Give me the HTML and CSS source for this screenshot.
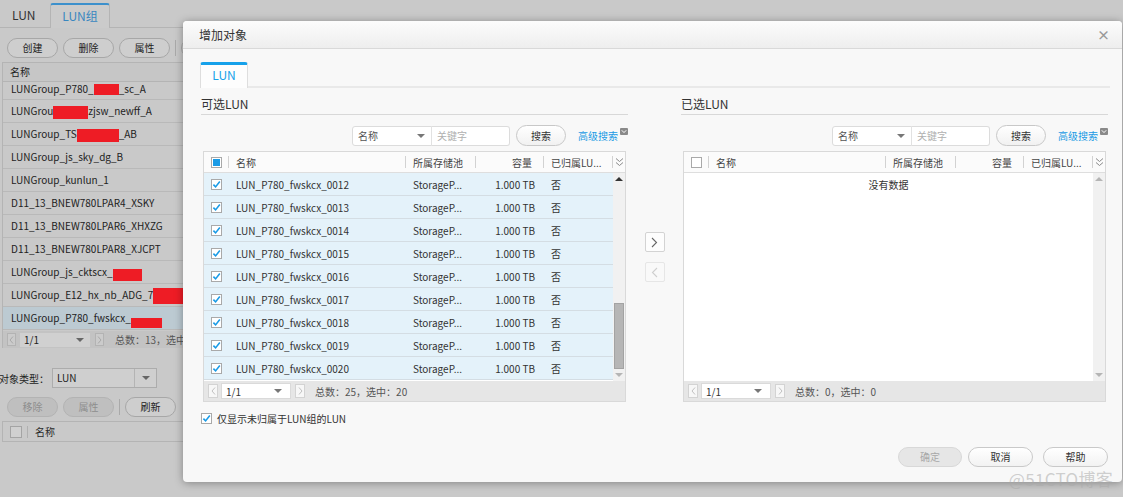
FILE: index.html
```html
<!DOCTYPE html>
<html>
<head>
<meta charset="utf-8">
<link rel="stylesheet" href="styles.css">
</head>
<body>
<div class="page">
  <div class="bg-tabs">
    <div class="bg-tab">LUN</div>
    <div class="bg-tab active">LUN组</div>
  </div>
  <div class="bg-toolbar">
    <span class="bg-btn">创建</span>
    <span class="bg-btn">删除</span>
    <span class="bg-btn">属性</span>
    <span class="bg-sep"></span>
    <span class="bg-btn"></span>
  </div>
  <div class="bg-list">
    <div class="bg-list-head">名称</div>
    <div class="bg-list-body">
      <div class="bg-row first">LUNGroup_P780_<span class="red r1"></span>_sc_A</div>
      <div class="bg-row">LUNGrou<span class="red r2"></span>zjsw_newff_A</div>
      <div class="bg-row">LUNGroup_TS<span class="red r3"></span>_AB</div>
      <div class="bg-row">LUNGroup_js_sky_dg_B</div>
      <div class="bg-row">LUNGroup_kunlun_1</div>
      <div class="bg-row">D11_13_BNEW780LPAR4_XSKY</div>
      <div class="bg-row">D11_13_BNEW780LPAR6_XHXZG</div>
      <div class="bg-row">D11_13_BNEW780LPAR8_XJCPT</div>
      <div class="bg-row">LUNGroup_js_cktscx_<span class="red r9"></span></div>
      <div class="bg-row">LUNGroup_E12_hx_nb_ADG_7<span class="red r10"></span></div>
      <div class="bg-row sel">LUNGroup_P780_fwskcx_<span class="red r11"></span></div>
    </div>
    <div class="bg-pager">
      <span class="bg-pbox"><svg width="5" height="8" viewBox="0 0 5 8"><path d="M4 0.5 L1 4 L4 7.5" fill="none" stroke="#a8a8a8" stroke-width="1"/></svg></span>
      <span class="bg-psel">1/1<i class="tri dark"></i></span>
      <span class="bg-pbox"><svg width="5" height="8" viewBox="0 0 5 8"><path d="M1 0.5 L4 4 L1 7.5" fill="none" stroke="#a8a8a8" stroke-width="1"/></svg></span>
      <span class="bg-ptext">总数：13，选中：1</span>
    </div>
  </div>
  <div class="bg-type">
    <span class="bg-type-label">对象类型：</span>
    <div class="bg-select"><span class="bg-select-val">LUN</span><span class="bg-select-dd"><i class="tri dark"></i></span></div>
  </div>
  <div class="bg-toolbar bg-toolbar2">
    <span class="bg-btn disabled">移除</span>
    <span class="bg-btn disabled">属性</span>
    <span class="bg-sep"></span>
    <span class="bg-btn">刷新</span>
  </div>
  <div class="bg-table2">
    <div class="bg-table2-head"><span class="bg-cb"></span><span class="bg-hsep"></span><span>名称</span></div>
  </div>
</div>

<div class="dialog">
  <div class="dlg-head">
    <span class="dlg-title">增加对象</span>
    <span class="dlg-close">×</span>
  </div>
  <div class="dlg-body">
    <div class="tabbar"><div class="tab">LUN</div></div>
    <div class="panes">
      <div class="pane">
        <div class="pane-title">可选LUN</div>
        <div class="search-row">
          <div class="sel-box"><span>名称</span><i class="tri"></i></div>
          <div class="kw">关键字</div>
          <div class="btn-search">搜索</div>
          <span class="adv">高级搜索</span>
          <svg class="adv-icon" width="8" height="7" viewBox="0 0 8 7"><rect x="0" y="0" width="8" height="7" rx="1" fill="#8a8a8a"/><path d="M1.8 2.3 L4 4.6 L6.2 2.3" fill="none" stroke="#fff" stroke-width="1"/></svg>
        </div>
        <div class="table">
          <div class="thead">
            <div class="c-cb"><span class="cb partial"><span></span></span></div>
            <div class="c-name hs">名称</div>
            <div class="c-pool hs">所属存储池</div>
            <div class="c-cap hs">容量</div>
            <div class="c-own hs">已归属LU...</div>
            <div class="c-opt"><svg width="9" height="10" viewBox="0 0 9 10"><path d="M1 1.5 L4.5 4.5 L8 1.5 M1 5.5 L4.5 8.5 L8 5.5" fill="none" stroke="#8a8a8a" stroke-width="1"/></svg></div>
          </div>
          <div class="tbody">
            <div class="rows">
              <div class="row"><div class="c-cb"><span class="cb"><svg width="9" height="9" viewBox="0 0 9 9"><path d="M1.4 4.6 L3.6 6.9 L7.8 1.6" fill="none" stroke="#1a9be6" stroke-width="1.6"/></svg></span></div><div class="c-name">LUN_P780_fwskcx_0012</div><div class="c-pool">StorageP...</div><div class="c-cap">1.000 TB</div><div class="c-own">否</div></div>
              <div class="row"><div class="c-cb"><span class="cb"><svg width="9" height="9" viewBox="0 0 9 9"><path d="M1.4 4.6 L3.6 6.9 L7.8 1.6" fill="none" stroke="#1a9be6" stroke-width="1.6"/></svg></span></div><div class="c-name">LUN_P780_fwskcx_0013</div><div class="c-pool">StorageP...</div><div class="c-cap">1.000 TB</div><div class="c-own">否</div></div>
              <div class="row"><div class="c-cb"><span class="cb"><svg width="9" height="9" viewBox="0 0 9 9"><path d="M1.4 4.6 L3.6 6.9 L7.8 1.6" fill="none" stroke="#1a9be6" stroke-width="1.6"/></svg></span></div><div class="c-name">LUN_P780_fwskcx_0014</div><div class="c-pool">StorageP...</div><div class="c-cap">1.000 TB</div><div class="c-own">否</div></div>
              <div class="row"><div class="c-cb"><span class="cb"><svg width="9" height="9" viewBox="0 0 9 9"><path d="M1.4 4.6 L3.6 6.9 L7.8 1.6" fill="none" stroke="#1a9be6" stroke-width="1.6"/></svg></span></div><div class="c-name">LUN_P780_fwskcx_0015</div><div class="c-pool">StorageP...</div><div class="c-cap">1.000 TB</div><div class="c-own">否</div></div>
              <div class="row"><div class="c-cb"><span class="cb"><svg width="9" height="9" viewBox="0 0 9 9"><path d="M1.4 4.6 L3.6 6.9 L7.8 1.6" fill="none" stroke="#1a9be6" stroke-width="1.6"/></svg></span></div><div class="c-name">LUN_P780_fwskcx_0016</div><div class="c-pool">StorageP...</div><div class="c-cap">1.000 TB</div><div class="c-own">否</div></div>
              <div class="row"><div class="c-cb"><span class="cb"><svg width="9" height="9" viewBox="0 0 9 9"><path d="M1.4 4.6 L3.6 6.9 L7.8 1.6" fill="none" stroke="#1a9be6" stroke-width="1.6"/></svg></span></div><div class="c-name">LUN_P780_fwskcx_0017</div><div class="c-pool">StorageP...</div><div class="c-cap">1.000 TB</div><div class="c-own">否</div></div>
              <div class="row"><div class="c-cb"><span class="cb"><svg width="9" height="9" viewBox="0 0 9 9"><path d="M1.4 4.6 L3.6 6.9 L7.8 1.6" fill="none" stroke="#1a9be6" stroke-width="1.6"/></svg></span></div><div class="c-name">LUN_P780_fwskcx_0018</div><div class="c-pool">StorageP...</div><div class="c-cap">1.000 TB</div><div class="c-own">否</div></div>
              <div class="row"><div class="c-cb"><span class="cb"><svg width="9" height="9" viewBox="0 0 9 9"><path d="M1.4 4.6 L3.6 6.9 L7.8 1.6" fill="none" stroke="#1a9be6" stroke-width="1.6"/></svg></span></div><div class="c-name">LUN_P780_fwskcx_0019</div><div class="c-pool">StorageP...</div><div class="c-cap">1.000 TB</div><div class="c-own">否</div></div>
              <div class="row"><div class="c-cb"><span class="cb"><svg width="9" height="9" viewBox="0 0 9 9"><path d="M1.4 4.6 L3.6 6.9 L7.8 1.6" fill="none" stroke="#1a9be6" stroke-width="1.6"/></svg></span></div><div class="c-name">LUN_P780_fwskcx_0020</div><div class="c-pool">StorageP...</div><div class="c-cap">1.000 TB</div><div class="c-own">否</div></div>
            </div>
            <div class="scroll">
              <div class="sc-arrow"><i class="tri-up"></i></div>
              <div class="sc-track"><div class="sc-thumb"></div></div>
              <div class="sc-arrow"><i class="tri light"></i></div>
            </div>
          </div>
          <div class="pager">
            <span class="pbox"><svg width="5" height="8" viewBox="0 0 5 8"><path d="M4 0.5 L1 4 L4 7.5" fill="none" stroke="#c0c0c0" stroke-width="1"/></svg></span>
            <span class="psel">1/1<i class="tri"></i></span>
            <span class="pbox"><svg width="5" height="8" viewBox="0 0 5 8"><path d="M1 0.5 L4 4 L1 7.5" fill="none" stroke="#c0c0c0" stroke-width="1"/></svg></span>
            <span class="ptext">总数：25，选中：20</span>
          </div>
        </div>
        <div class="only-row">
          <span class="cb"><svg width="9" height="9" viewBox="0 0 9 9"><path d="M1.4 4.6 L3.6 6.9 L7.8 1.6" fill="none" stroke="#1a9be6" stroke-width="1.6"/></svg></span>
          <span class="only-text">仅显示未归属于LUN组的LUN</span>
        </div>
      </div>

      <div class="mid">
        <div class="arrow-btn"><svg width="7" height="11" viewBox="0 0 7 11"><path d="M1 1 L5.5 5.5 L1 10" fill="none" stroke="#666" stroke-width="1.1"/></svg></div>
        <div class="arrow-btn disabled"><svg width="7" height="11" viewBox="0 0 7 11"><path d="M6 1 L1.5 5.5 L6 10" fill="none" stroke="#cfcfcf" stroke-width="1.1"/></svg></div>
      </div>

      <div class="pane">
        <div class="pane-title">已选LUN</div>
        <div class="search-row">
          <div class="sel-box"><span>名称</span><i class="tri"></i></div>
          <div class="kw">关键字</div>
          <div class="btn-search">搜索</div>
          <span class="adv">高级搜索</span>
          <svg class="adv-icon" width="8" height="7" viewBox="0 0 8 7"><rect x="0" y="0" width="8" height="7" rx="1" fill="#8a8a8a"/><path d="M1.8 2.3 L4 4.6 L6.2 2.3" fill="none" stroke="#fff" stroke-width="1"/></svg>
        </div>
        <div class="table">
          <div class="thead">
            <div class="c-cb"><span class="cb"></span></div>
            <div class="c-name hs">名称</div>
            <div class="c-pool hs">所属存储池</div>
            <div class="c-cap hs">容量</div>
            <div class="c-own hs">已归属LU...</div>
            <div class="c-opt"><svg width="9" height="10" viewBox="0 0 9 10"><path d="M1 1.5 L4.5 4.5 L8 1.5 M1 5.5 L4.5 8.5 L8 5.5" fill="none" stroke="#8a8a8a" stroke-width="1"/></svg></div>
          </div>
          <div class="tbody">
            <div class="rows empty"><div class="nodata">没有数据</div></div>
            <div class="scroll">
              <div class="sc-arrow"><i class="tri-up light"></i></div>
              <div class="sc-track"></div>
              <div class="sc-arrow"><i class="tri light"></i></div>
            </div>
          </div>
          <div class="pager">
            <span class="pbox"><svg width="5" height="8" viewBox="0 0 5 8"><path d="M4 0.5 L1 4 L4 7.5" fill="none" stroke="#c0c0c0" stroke-width="1"/></svg></span>
            <span class="psel">1/1<i class="tri"></i></span>
            <span class="pbox"><svg width="5" height="8" viewBox="0 0 5 8"><path d="M1 0.5 L4 4 L1 7.5" fill="none" stroke="#c0c0c0" stroke-width="1"/></svg></span>
            <span class="ptext">总数：0，选中：0</span>
          </div>
        </div>
      </div>
    </div>
  </div>
  <div class="dlg-foot">
    <span class="fbtn disabled">确定</span>
    <span class="fbtn cancel">取消</span>
    <span class="fbtn">帮助</span>
  </div>
</div>
<div class="watermark">@51CTO博客</div>
</body>
</html>
```

FILE: styles.css
```css
* { box-sizing: border-box; }
html, body { margin: 0; padding: 0; }
body {
  width: 1123px;
  height: 497px;
  overflow: hidden;
  position: relative;
  background: #c9c9c9;
  font-family: "Noto Sans CJK SC", "Open Sans", sans-serif;
  font-size: 10px;
  color: #2a2a2a;
}
i { display: inline-block; }

/* shared small triangles */
.tri {
  width: 0; height: 0;
  border-left: 4px solid transparent;
  border-right: 4px solid transparent;
  border-top: 4px solid #777;
}
.tri.dark { border-top-color: #666; }
.tri.light { border-top-color: #b5b5b5; }
.tri-up {
  width: 0; height: 0;
  border-left: 4px solid transparent;
  border-right: 4px solid transparent;
  border-bottom: 4px solid #333;
}
.tri-up.light { border-bottom-color: #b5b5b5; }

/* ---------- background (dimmed) page ---------- */
.page { width: 600px; }
.bg-tabs {
  display: flex;
  height: 28px;
  border-bottom: 1px solid #b4b4b4;
  font-size: 12px;
}
.bg-tab {
  width: 50px;
  margin-top: 3px;
  height: 24px;
  line-height: 24px;
  padding-left: 12px;
  color: #333;
}
.bg-tab.active {
  width: 60px;
  height: 25px;
  padding-left: 0;
  text-align: center;
  line-height: 22px;
  color: #3987c0;
  border: 1px solid #b4b4b4;
  border-top: 2px solid #3c90cc;
  border-bottom: none;
  border-radius: 3px 3px 0 0;
  background: #cbcbcb;
}
.bg-toolbar {
  display: flex;
  align-items: center;
  gap: 5px;
  margin-top: 10px;
  padding-left: 7px;
  height: 20px;
}
.bg-btn {
  width: 51px;
  height: 20px;
  border: 1px solid #a7a7a7;
  border-radius: 10px;
  background: #cecece;
  text-align: center;
  line-height: 18px;
  color: #222;
}
.bg-btn.disabled { background: #bfbfbf; color: #8e8e8e; border-color: #b3b3b3; }
.bg-sep { width: 1px; height: 16px; background: #a9a9a9; }
.bg-list {
  margin-top: 4px;
  margin-left: 2px;
  border-left: 1px solid #b4b4b4;
}
.bg-list-head {
  height: 20px;
  line-height: 18px;
  padding-left: 7px;
  border-top: 1px solid #b4b4b4;
  border-bottom: 1px solid #b4b4b4;
  background: #c6c6c6;
  color: #222;
}
.bg-list-body { height: 249px; overflow: hidden; }
.bg-row {
  height: 23px;
  line-height: 22px;
  padding-left: 8px;
  border-bottom: 1px solid #b9b9b9;
  white-space: nowrap;
  color: #222;
}
.bg-row.first { height: 18px; line-height: 13px; }
.bg-row.sel { background: #bccad2; }
.red { display: inline-block; background: #ee1c25; vertical-align: middle; }
.r1 { width: 25px; height: 11px; margin-top: -2px; }
.r2 { width: 35px; height: 13px; }
.r3 { width: 42px; height: 13px; }
.r9 { width: 29px; height: 12px; margin-top: 3px; }
.r10 { width: 31px; height: 16px; }
.r11 { width: 31px; height: 10px; margin-top: 8px; }
.bg-pager {
  height: 17px;
  background: #c3c3c3;
  display: flex;
  align-items: center;
  padding-left: 4px;
}
.bg-pbox {
  width: 9px; height: 13px;
  border: 1px solid #b3b3b3;
  background: #cbcbcb;
  display: flex; align-items: center; justify-content: center;
}
.bg-psel {
  width: 70px; height: 14px;
  margin: 0 5px 0 4px;
  background: #d0d0d0;
  display: flex; align-items: center; justify-content: space-between;
  padding: 0 6px 0 4px;
  color: #222;
}
.bg-ptext { margin-left: 11px; color: #555; white-space: nowrap; }
.bg-type {
  display: flex;
  align-items: center;
  margin-top: 20px;
  height: 20px;
}
.bg-type-label { color: #222; margin-left: -1px; }
.bg-select {
  display: flex;
  width: 105px;
  height: 20px;
  margin-left: 3px;
  border: 1px solid #acacac;
  background: #cfcfcf;
}
.bg-select-val { flex: 1; padding-left: 4px; line-height: 18px; color: #222; }
.bg-select-dd {
  width: 22px;
  border-left: 1px solid #b4b4b4;
  display: flex; align-items: center; justify-content: center;
}
.bg-toolbar2 { margin-top: 9px; }
.bg-table2 {
  margin-top: 4px;
  margin-left: 2px;
  border-left: 1px solid #b4b4b4;
  border-top: 1px solid #b4b4b4;
}
.bg-table2-head {
  height: 20px;
  display: flex;
  align-items: center;
  border-bottom: 1px solid #b4b4b4;
  padding-left: 7px;
}
.bg-cb { width: 12px; height: 12px; border: 1px solid #a4a4a4; background: #d0d0d0; }
.bg-hsep { width: 1px; height: 12px; background: #b0b0b0; margin: 0 7px 0 5px; }

/* ---------- dialog ---------- */
.dialog {
  position: absolute;
  left: 183px;
  top: 21px;
  width: 939px;
  height: 461px;
  background: #f8f8f8;
  border-radius: 4px;
  box-shadow: 0 1px 8px rgba(0, 0, 0, 0.35);
  display: flex;
  flex-direction: column;
}
.dlg-head {
  flex: none;
  height: 28px;
  display: flex;
  align-items: center;
  justify-content: space-between;
  padding: 0 12px 0 16px;
  background: linear-gradient(#fcfcfc, #eeeeee);
  border-bottom: 1px solid #d9d9d9;
  border-radius: 4px 4px 0 0;
  font-size: 12px;
  color: #333;
}
.dlg-close { font-size: 13px; color: #999; font-weight: bold; line-height: 1; }
.dlg-body { padding: 13px 12px 0 17px; }
.tabbar {
  display: flex;
  border-bottom: 2px solid #e9e9e9;
  height: 26px;
}
.tab {
  width: 48px;
  height: 26px;
  border: 1px solid #dedede;
  border-top: 3px solid #16a1ea;
  border-bottom: none;
  border-radius: 3px 3px 0 0;
  background: #fdfdfd;
  color: #16a1ea;
  font-size: 12px;
  text-align: center;
  line-height: 20px;
}
.panes { display: flex; margin-left: 1px; }
.pane { width: 427px; display: flex; flex-direction: column; }
.pane-title {
  height: 27px;
  padding-top: 8px;
  line-height: 16px;
  border-bottom: 1px solid #d8d8d8;
  font-size: 12px;
  color: #333;
}
.search-row {
  display: flex;
  justify-content: flex-end;
  align-items: center;
  margin-top: 10px;
  height: 21px;
}
.sel-box {
  width: 80px;
  height: 20px;
  border: 1px solid #dcdcdc;
  border-radius: 3px 0 0 3px;
  background: #fff;
  display: flex;
  align-items: center;
  justify-content: space-between;
  padding: 0 6px 0 5px;
  color: #555;
}
.kw {
  width: 79px;
  height: 20px;
  border: 1px solid #dcdcdc;
  border-left: 1px solid #e2e2e2;
  margin-left: -1px;
  border-radius: 0 3px 3px 0;
  background: #fff;
  color: #b0b0b0;
  padding-left: 5px;
  line-height: 18px;
}
.btn-search {
  width: 50px;
  height: 21px;
  margin-left: 6px;
  border: 1px solid #c8c8c8;
  border-radius: 11px;
  background: linear-gradient(#ffffff, #f1f1f1);
  text-align: center;
  line-height: 19px;
  color: #333;
}
.adv { margin-left: 12px; color: #1a9ae4; white-space: nowrap; }
.adv-icon { align-self: flex-start; margin: 3px 0 0 2px; }

.table {
  margin: 5px 2px 0 2px;
  border: 1px solid #d9d9d9;
  background: #fff;
}
.thead {
  display: flex;
  height: 21px;
  border-bottom: 1px solid #dedede;
  background: #fbfbfb;
  color: #444;
}
.thead > div, .row > div {
  display: flex;
  align-items: center;
  white-space: nowrap;
  overflow: hidden;
}
.c-cb { width: 25px; padding-left: 7px; }
.c-name { width: 177px; padding-left: 7px; }
.c-pool { width: 70px; padding-left: 7px; }
.c-cap { width: 68px; justify-content: flex-end; padding-right: 9px; }
.thead .c-cap { padding-right: 12px; }
.c-own { width: 69px; padding-left: 7px; }
.c-opt { width: 12px; justify-content: center; }
.thead .c-cb, .hs {
  background: linear-gradient(#d2d2d2, #d2d2d2) right center / 1px 12px no-repeat;
}
.thead > .c-cap { justify-content: flex-end; }

.cb {
  width: 11px;
  height: 11px;
  border: 1px solid #a9a9a9;
  background: #fff;
  display: inline-flex;
  align-items: center;
  justify-content: center;
  flex: none;
}
.cb.partial span { width: 7px; height: 7px; background: #1a9be6; }

.tbody { display: flex; height: 208px; }
.rows { width: 409px; }
.row {
  display: flex;
  height: 23px;
  border-bottom: 1px solid #d4dde3;
  background: #e4f2fa;
  color: #333;
}
.rows.empty { background: #fff; }
.nodata { text-align: center; padding-top: 4px; line-height: 16px; color: #333; }
.scroll {
  width: 12px;
  background: #f1f1f1;
  display: flex;
  flex-direction: column;
}
.sc-arrow { height: 12px; display: flex; align-items: center; justify-content: center; }
.sc-track { flex: 1; display: flex; flex-direction: column; justify-content: flex-end; align-items: center; }
.sc-thumb { width: 10px; height: 66px; background: #b6b6b6; border: 1px solid #a3a3a3; }

.pager {
  height: 20px;
  background: #e6e6e6;
  display: flex;
  align-items: center;
  padding-left: 4px;
}
.pbox {
  width: 10px; height: 14px;
  border: 1px solid #d3d3d3;
  background: #f7f7f7;
  display: flex; align-items: center; justify-content: center;
}
.psel {
  width: 70px; height: 16px;
  margin: 0 4px 0 3px;
  border: 1px solid #dadada;
  background: #fff;
  display: flex; align-items: center; justify-content: space-between;
  padding: 0 8px 0 4px;
  color: #333;
}
.ptext { margin-left: 10px; color: #555; white-space: nowrap; }

.only-row {
  display: flex;
  align-items: center;
  margin-top: 10px;
  height: 12px;
}
.only-text { margin-left: 5px; color: #333; }

.mid {
  width: 53px;
  display: flex;
  flex-direction: column;
  align-items: center;
  padding-top: 144px;
  gap: 10px;
}
.arrow-btn {
  width: 20px;
  height: 20px;
  border: 1px solid #d3d3d3;
  border-radius: 2px;
  background: #fdfdfd;
  display: flex; align-items: center; justify-content: center;
}
.arrow-btn.disabled { border-color: #e6e6e6; background: #f9f9f9; }

.dlg-foot {
  margin-top: auto;
  display: flex;
  justify-content: flex-end;
  padding: 0 14px 15px 0;
}
.fbtn {
  width: 65px;
  height: 20px;
  border: 1px solid #c9c9c9;
  border-radius: 10px;
  background: linear-gradient(#ffffff, #f2f2f2);
  text-align: center;
  line-height: 18px;
  color: #333;
}
.fbtn.disabled {
  width: 64px;
  margin-right: 6px;
  background: #e6e6e6;
  border-color: #d8d8d8;
  color: #a8a8a8;
}
.fbtn.cancel { margin-right: 10px; }

.watermark {
  position: absolute;
  right: 10px;
  bottom: 8px;
  font-size: 17px;
  color: rgba(170, 170, 170, 0.55);
  line-height: 20px;
  letter-spacing: 0.3px;
}
```
